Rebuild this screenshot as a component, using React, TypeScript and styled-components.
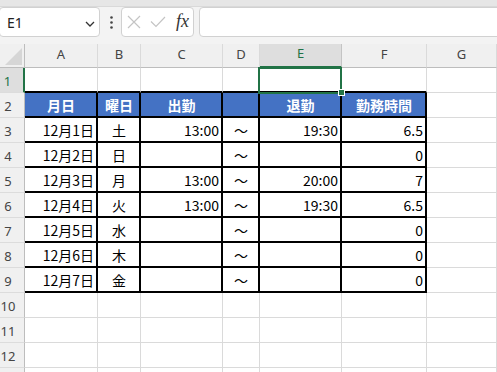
import { Fragment } from 'react';
import styled, { createGlobalStyle } from 'styled-components';

const GlobalStyle = createGlobalStyle`
  html, body {
    margin: 0;
    padding: 0;
    background: #ffffff;
  }
  body {
    font-family: "Noto Sans", "Noto Sans CJK JP", sans-serif;
  }
`;

const GREEN = '#217346';
const GRID = '#dadada';
const BLACK = '#000000';

const Window = styled.div`
  width: 497px;
  height: 372px;
  overflow: hidden;
  display: flex;
  flex-direction: column;
  background: #f3f3f3;
`;

const TopStrip = styled.div`
  flex-shrink: 0;
  height: 6px;
  background: #e6e6e6;
  border-bottom: 1px solid #d9d9d9;
`;

const FormulaBar = styled.div`
  flex-shrink: 0;
  display: flex;
  align-items: flex-start;
  height: 37px;
  box-sizing: border-box;
`;

const Box = styled.div`
  height: 30px;
  box-sizing: border-box;
  border: 1px solid #d1d1d1;
  border-radius: 4px;
  background: #ffffff;
  display: flex;
  align-items: center;
`;

const NameBox = styled(Box)`
  width: 101px;
  margin-left: -1px;
  justify-content: space-between;
  padding: 0 4px 0 7px;
  font-size: 14px;
  color: #222;
`;

const Chevron = styled.svg`
  margin-top: 4px;
`;

const Dots = styled.div`
  width: 21px;
  height: 30px;
  display: flex;
  align-items: center;
  justify-content: center;
  padding-left: 2px;
  box-sizing: border-box;
`;

const FxBox = styled(Box)`
  width: 73px;
  padding-left: 5px;
  gap: 9px;
  margin-right: 5px;
`;

const FxText = styled.span`
  font-family: "Liberation Serif", serif;
  font-style: italic;
  font-size: 18px;
  color: #333;
  margin-left: 1px;
  line-height: 1;
  margin-top: -2px;
`;

const FormulaInput = styled(Box)`
  flex: 1;
  margin-right: -6px;
`;

const Sheet = styled.div`
  flex: 1;
  display: grid;
  grid-template-columns: 25px 73px 43px 82px 37px 82px 85px 1fr;
  grid-template-rows: 24px;
  grid-auto-rows: 25px;
  background: #ffffff;
  overflow: hidden;
`;

const Corner = styled.div`
  position: relative;
  background: #f0f0f0;
  border-right: 1px solid #bdbdbd;
  border-bottom: 1px solid #bdbdbd;
  box-sizing: border-box;

  &::after {
    content: '';
    position: absolute;
    right: 2px;
    bottom: 2px;
    width: 17px;
    height: 17px;
    background: #d6d6d6;
    clip-path: polygon(100% 0, 100% 100%, 0 100%);
  }
`;

const ColHead = styled.div<{ $active?: boolean }>`
  display: flex;
  align-items: center;
  justify-content: center;
  box-sizing: border-box;
  padding-bottom: 4px;
  font-size: 13px;
  color: ${({ $active }) => ($active ? GREEN : '#444')};
  background: ${({ $active }) => ($active ? '#dedede' : '#f0f0f0')};
  border-right: 1px solid ${({ $active }) => ($active ? '#c4c4c4' : GRID)};
  border-bottom: ${({ $active }) => ($active ? `2px solid ${GREEN}` : '1px solid #bdbdbd')};
`;

const RowHead = styled.div<{ $active?: boolean }>`
  display: flex;
  align-items: center;
  justify-content: center;
  box-sizing: border-box;
  padding: 2px 8px 0 0;
  font-size: 13px;
  color: ${({ $active }) => ($active ? GREEN : '#444')};
  background: ${({ $active }) => ($active ? '#dedede' : '#f0f0f0')};
  border-right: ${({ $active }) => ($active ? `2px solid ${GREEN}` : '1px solid #bdbdbd')};
  border-bottom: 1px solid #dcdcdc;
`;

const Cell = styled.div<{
  $align: string;
  $rightBlack: boolean;
  $bottomBlack: boolean;
  $head: boolean;
}>`
  position: relative;
  display: flex;
  align-items: center;
  justify-content: ${({ $align }) => $align};
  box-sizing: border-box;
  padding: 0 2px 0 3px;
  border-right: ${({ $rightBlack }) => ($rightBlack ? `2px solid ${BLACK}` : `1px solid ${GRID}`)};
  border-bottom: ${({ $bottomBlack }) => ($bottomBlack ? `2px solid ${BLACK}` : `1px solid ${GRID}`)};
  background: ${({ $head }) => ($head ? '#4472c4' : '#ffffff')};
  color: ${({ $head }) => ($head ? '#ffffff' : '#000000')};
  font-family: "Noto Sans CJK JP", sans-serif;
  font-weight: ${({ $head }) => ($head ? 700 : 400)};
  font-size: 14px;
  white-space: nowrap;
`;

const SelectionFrame = styled.div`
  position: absolute;
  top: -1px;
  left: -2px;
  right: -1px;
  bottom: -3px;
  border: 2px solid ${GREEN};
  z-index: 2;
  pointer-events: none;
`;

const FillHandle = styled.div`
  position: absolute;
  right: -3px;
  bottom: -4px;
  width: 5px;
  height: 5px;
  background: ${GREEN};
  box-shadow: 0 0 0 1px #ffffff;
  z-index: 3;
`;

const COLUMNS = ['A', 'B', 'C', 'D', 'E', 'F', 'G'];
const HEADER = ['月日', '曜日', '出勤', '', '退勤', '勤務時間', ''];
const DATA = [
  ['12月1日', '土', '13:00', '〜', '19:30', '6.5', ''],
  ['12月2日', '日', '', '〜', '', '0', ''],
  ['12月3日', '月', '13:00', '〜', '20:00', '7', ''],
  ['12月4日', '火', '13:00', '〜', '19:30', '6.5', ''],
  ['12月5日', '水', '', '〜', '', '0', ''],
  ['12月6日', '木', '', '〜', '', '0', ''],
  ['12月7日', '金', '', '〜', '', '0', ''],
];
const ALIGNS = ['flex-end', 'center', 'flex-end', 'center', 'flex-end', 'flex-end', 'flex-start'];
// row 13 is only a sliver at the bottom edge, so its number is left off
const ROW_COUNT = 13;
const LABELLED_ROWS = 12;

const cellText = (row: number, col: number) => {
  if (row === 2) return HEADER[col];
  if (row >= 3 && row <= 9) return DATA[row - 3][col];
  return '';
};

export default function App() {
  const rows = Array.from({ length: ROW_COUNT }, (_, i) => i + 1);

  return (
    <>
      <GlobalStyle />
      <Window>
        <TopStrip />
        <FormulaBar>
          <NameBox>
            <span>E1</span>
            <Chevron width="10" height="6" viewBox="0 0 10 6">
              <polyline points="1,1 5,5 9,1" fill="none" stroke="#333" strokeWidth="1.3" />
            </Chevron>
          </NameBox>
          <Dots>
            <svg width="3" height="13" viewBox="0 0 3 13">
              <circle cx="1.5" cy="1.5" r="1.3" fill="#444" />
              <circle cx="1.5" cy="6.5" r="1.3" fill="#444" />
              <circle cx="1.5" cy="11.5" r="1.3" fill="#444" />
            </svg>
          </Dots>
          <FxBox>
            <svg width="14" height="14" viewBox="0 0 14 14">
              <path d="M1 1 L13 13 M13 1 L1 13" stroke="#c4c4c4" strokeWidth="1.2" fill="none" />
            </svg>
            <svg width="16" height="12" viewBox="0 0 16 12">
              <polyline points="1,5.5 6,10.5 15,1" stroke="#c4c4c4" strokeWidth="1.2" fill="none" />
            </svg>
            <FxText>fx</FxText>
          </FxBox>
          <FormulaInput />
        </FormulaBar>
        <Sheet>
          <Corner />
          {COLUMNS.map((c) => (
            <ColHead key={c} $active={c === 'E'}>
              {c}
            </ColHead>
          ))}
          {rows.map((r) => (
            <Fragment key={r}>
              <RowHead $active={r === 1}>{r <= LABELLED_ROWS ? r : ''}</RowHead>
              {COLUMNS.map((c, ci) => {
                const inTable = r >= 2 && r <= 9 && ci <= 5;
                const selected = r === 1 && c === 'E';
                return (
                  <Cell
                    key={`${c}${r}`}
                    $align={r === 2 ? 'center' : ALIGNS[ci]}
                    $rightBlack={inTable}
                    $bottomBlack={ci <= 5 && r >= 1 && r <= 9}
                    $head={r === 2 && ci <= 5}
                  >
                    {cellText(r, ci)}
                    {selected && (
                      <>
                        <SelectionFrame />
                        <FillHandle />
                      </>
                    )}
                  </Cell>
                );
              })}
            </Fragment>
          ))}
        </Sheet>
      </Window>
    </>
  );
}
